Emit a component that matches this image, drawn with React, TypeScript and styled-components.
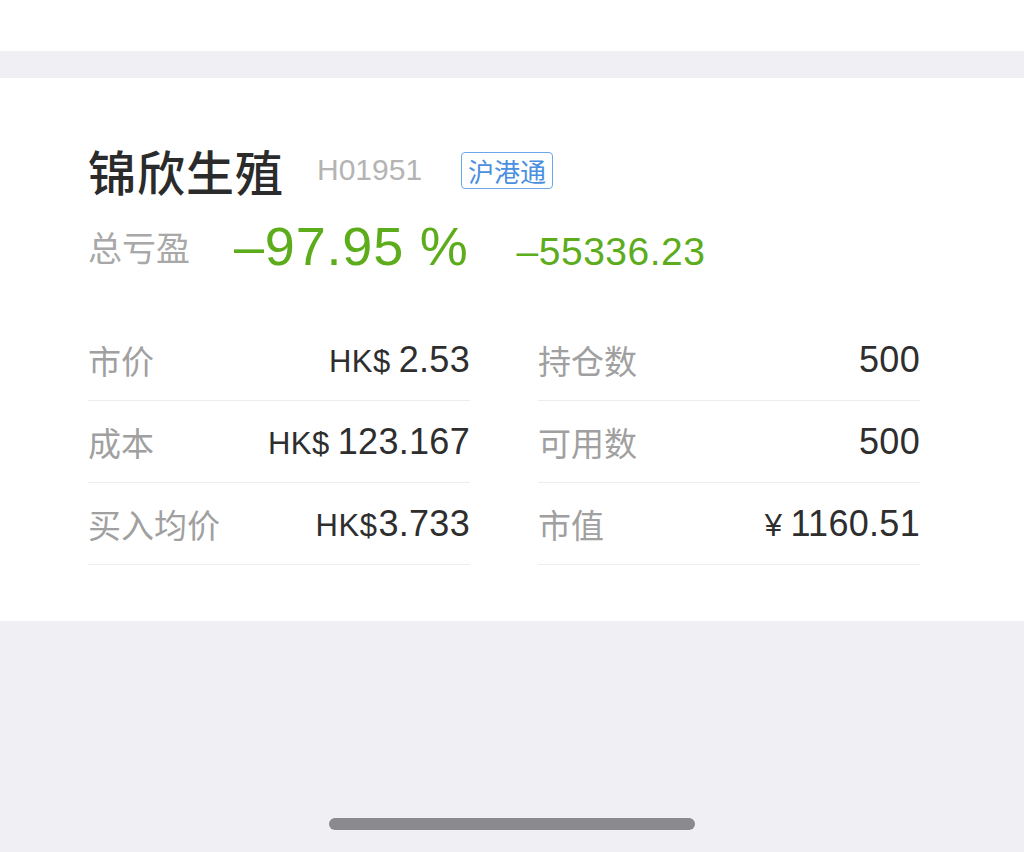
import styled, { createGlobalStyle } from "styled-components";

const GlobalStyle = createGlobalStyle`
  html, body {
    margin: 0;
    padding: 0;
    background: #efeff4;
  }
  body {
    font-family: "Liberation Sans", "Noto Sans CJK SC", sans-serif;
  }
`;

type Cell = { label: string; unit?: string; spaced?: boolean; value: string };

const leftCells: Cell[] = [
  { label: "市价", unit: "HK$", spaced: true, value: "2.53" },
  { label: "成本", unit: "HK$", spaced: true, value: "123.167" },
  { label: "买入均价", unit: "HK$", value: "3.733" },
];

const rightCells: Cell[] = [
  { label: "持仓数", value: "500" },
  { label: "可用数", value: "500" },
  { label: "市值", unit: "¥", spaced: true, value: "1160.51" },
];

const App = () => {
  return (
    <Page>
      <GlobalStyle />
      <TopBar />
      <Gap />
      <Card>
        <TitleRow>
          <Name>锦欣生殖</Name>
          <Code>H01951</Code>
          <Tag>沪港通</Tag>
        </TitleRow>
        <ProfitRow>
          <ProfitLabel>总亏盈</ProfitLabel>
          <Percent>–97.95 %</Percent>
          <Amount>–55336.23</Amount>
        </ProfitRow>
        <Columns>
          {[leftCells, rightCells].map((col, i) => (
            <Column key={i}>
              {col.map((c) => (
                <Row key={c.label}>
                  <Label>{c.label}</Label>
                  <Value>
                    {c.unit && <Unit spaced={!!c.spaced}>{c.unit}</Unit>}
                    {c.value}
                  </Value>
                </Row>
              ))}
            </Column>
          ))}
        </Columns>
      </Card>
      <Bottom>
        <HomeBar />
      </Bottom>
    </Page>
  );
};

export default App;

const Page = styled.div`
  width: 1024px;
  height: 852px;
  display: flex;
  flex-direction: column;
  background: #efeff4;
  overflow: hidden;
`;

const TopBar = styled.div`
  height: 51px;
  background: #fff;
`;

const Gap = styled.div`
  height: 27px;
`;

const Card = styled.div`
  background: #fff;
  padding: 62px 104px 56px 88px;
`;

const TitleRow = styled.div`
  display: flex;
  align-items: center;
  height: 60px;
`;

const Name = styled.span`
  font-family: "Noto Sans CJK SC", sans-serif;
  font-size: 48px;
  font-weight: 500;
  color: #2b2b2b;
  letter-spacing: 1px;
`;

const Code = styled.span`
  margin-left: 33px;
  font-size: 30px;
  color: #b4b4b4;
`;

const Tag = styled.span`
  margin-left: 39px;
  padding: 0 6px;
  height: 37px;
  line-height: 35px;
  box-sizing: border-box;
  border: 1.5px solid #6aa6ec;
  border-radius: 4px;
  color: #4a8fe0;
  font-family: "Noto Sans CJK SC", sans-serif;
  font-size: 26px;
`;

const ProfitRow = styled.div`
  display: flex;
  align-items: center;
  height: 60px;
  margin-top: 16px;
`;

const ProfitLabel = styled.span`
  font-family: "Noto Sans CJK SC", sans-serif;
  font-size: 34px;
  color: #a8a8a8;
`;

const Percent = styled.span`
  margin-left: 44px;
  font-size: 54px;
  letter-spacing: 0.8px;
  color: #5cac1c;
`;

const Amount = styled.span`
  margin-left: 48px;
  margin-top: 12px;
  font-size: 39px;
  letter-spacing: 0.5px;
  color: #5cac1c;
`;

const Columns = styled.div`
  display: grid;
  grid-template-columns: 382px 382px;
  column-gap: 68px;
  margin-top: 43px;
`;

const Column = styled.div`
  display: flex;
  flex-direction: column;
`;

const Row = styled.div`
  display: flex;
  align-items: center;
  justify-content: space-between;
  height: 81px;
  border-bottom: 1px solid #ededed;
`;

const Label = styled.span`
  font-family: "Noto Sans CJK SC", sans-serif;
  font-size: 33px;
  color: #a0a0a0;
`;

const Value = styled.span`
  font-size: 36px;
  letter-spacing: 0.3px;
  color: #2e2e2e;
`;

const Unit = styled.span<{ spaced: boolean }>`
  font-size: 31px;
  letter-spacing: 0.5px;
  margin-right: ${(p) => (p.spaced ? "8px" : "1px")};
`;

const Bottom = styled.div`
  flex: 1;
  display: flex;
  align-items: flex-end;
  justify-content: center;
  padding-bottom: 22px;
`;

const HomeBar = styled.div`
  width: 366px;
  height: 12px;
  border-radius: 6px;
  background: #8a8a8e;
`;
